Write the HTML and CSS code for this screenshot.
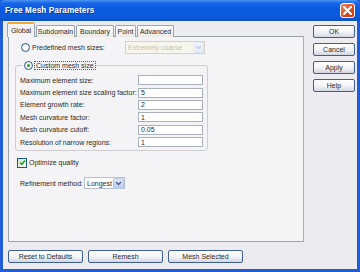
FILE: index.html
```html
<!DOCTYPE html>
<html lang="en">
<head>
  <meta charset="UTF-8" />
  <title>Free Mesh Parameters</title>
  <link rel="stylesheet" href="styles.css">
</head>
<body>
  <div class="window">
    <div class="titlebar">
      <span class="title">Free Mesh Parameters</span>
      <span class="close">
        <svg width="9" height="9" viewBox="0 0 9 9"><path d="M1 1 L8 8 M8 1 L1 8" stroke="#fff" stroke-width="2" stroke-linecap="square" /></svg>
      </span>
    </div>

    <div class="frame">
      <div class="main">
        <div class="tabbox">
          <div class="tabstrip">
            <span class="tab active">Global</span>
            <span class="tab w-sub">Subdomain</span>
            <span class="tab w-bnd">Boundary</span>
            <span class="tab w-pt">Point</span>
            <span class="tab w-adv">Advanced</span>
          </div>

          <div class="panel">
            <div class="predef">
              <span class="radio"></span>
              <span class="predef-label">Predefined mesh sizes:</span>
              <span class="combo disabled">
                <span class="combo-text">Extremely coarse</span>
                <span class="combo-btn"><svg width="7" height="5" viewBox="0 0 7 5"><path d="M1 1 L3.5 3.5 L6 1" fill="none" stroke="#c6d0e4" stroke-width="1.4" /></svg></span>
              </span>
            </div>

            <fieldset class="group">
              <legend>
                <span class="radio checked"></span>
                <span class="focus">Custom mesh size</span>
              </legend>
              <div class="field"><span class="field-label">Maximum element size:</span><span class="textbox"></span></div>
              <div class="field"><span class="field-label">Maximum element size scaling factor:</span><span class="textbox">5</span></div>
              <div class="field"><span class="field-label">Element growth rate:</span><span class="textbox">2</span></div>
              <div class="field"><span class="field-label">Mesh curvature factor:</span><span class="textbox">1</span></div>
              <div class="field"><span class="field-label">Mesh curvature cutoff:</span><span class="textbox">0.05</span></div>
              <div class="field"><span class="field-label">Resolution of narrow regions:</span><span class="textbox">1</span></div>
            </fieldset>

            <div class="check-row">
              <span class="checkbox">
                <svg width="7" height="7" viewBox="0 0 7 7"><path d="M1 3.5 L2.8 5.3 L6 1.5" fill="none" stroke="#21a121" stroke-width="1.5" /></svg>
              </span>
              <span>Optimize quality</span>
            </div>

            <div class="refine">
              <span class="refine-label">Refinement method:</span>
              <span class="combo small">
                <span class="combo-text">Longest</span>
                <span class="combo-btn"><svg width="7" height="5" viewBox="0 0 7 5"><path d="M1 1 L3.5 3.5 L6 1" fill="none" stroke="#4d6185" stroke-width="1.4" /></svg></span>
              </span>
            </div>
          </div>
        </div>

        <div class="side">
          <span class="btn">OK</span>
          <span class="btn">Cancel</span>
          <span class="btn">Apply</span>
          <span class="btn">Help</span>
        </div>
      </div>

      <div class="footer">
        <span class="btn wide">Reset to Defaults</span>
        <span class="btn wide">Remesh</span>
        <span class="btn wide">Mesh Selected</span>
      </div>
    </div>
  </div>
</body>
</html>
```

FILE: styles.css
```css
body {
  margin: 0;
  font-family: 'Liberation Sans', Arial, sans-serif;
  font-size: 7px;
  color: #2b2b2b;
}

.window {
  width: 360px;
  height: 272px;
  display: flex;
  flex-direction: column;
  background-color: #1f5cd6;
}

.titlebar {
  height: 21px;
  flex: none;
  display: flex;
  align-items: center;
  justify-content: space-between;
  padding: 0 5px 0 5px;
  box-sizing: border-box;
  background: linear-gradient(#4d95f4 0, #1a66e6 3px, #0a5ae2 40%, #0c5ada 80%, #0a4fc6 100%);
  border-radius: 5px 5px 0 0;
}

.title {
  color: #fff;
  font-weight: bold;
  font-size: 8.2px;
  letter-spacing: 0.1px;
  text-shadow: 1px 1px 0 #0a3a9a;
}

.close {
  width: 13px;
  height: 13px;
  border: 1px solid #fff;
  border-radius: 3px;
  background: linear-gradient(135deg, #f08a66, #d9471f 60%, #c43a12);
  display: flex;
  align-items: center;
  justify-content: center;
}

.frame {
  flex: 1;
  margin: 0 3px 3px 3px;
  background-color: #ecebef;
  padding: 2px 0 0 5px;
  display: flex;
  flex-direction: column;
}

.main {
  display: flex;
}

.tabbox {
  width: 296px;
}

.tabstrip {
  height: 14px;
  display: flex;
  align-items: flex-end;
  margin-bottom: -1px;
  position: relative;
  z-index: 1;
}

.tab {
  height: 12px;
  box-sizing: border-box;
  border: 1px solid #9ba3ad;
  border-bottom: none;
  border-radius: 2px 2px 0 0;
  background: linear-gradient(#ffffff, #ecebe6);
  display: flex;
  align-items: center;
  justify-content: center;
  margin-right: 1px;
}

.tab.active {
  width: 28px;
  height: 15px;
  margin-left: -1px;
  background: #f4f4f6;
  border-top: 2px solid #f5a935;
  padding-bottom: 1px;
}

.w-sub { width: 39px; }
.w-bnd { width: 38px; }
.w-pt { width: 21px; }
.w-adv { width: 37px; }

.panel {
  height: 206px;
  box-sizing: border-box;
  border: 1px solid #9ba3ad;
  border-right-color: #a8aeb6;
  background-color: #f4f4f6;
  padding: 4px 0 0 12px;
}

.predef {
  height: 13px;
  display: flex;
  align-items: center;
}

.radio {
  width: 7px;
  height: 7px;
  border: 1px solid #2a5a8e;
  border-radius: 50%;
  background: radial-gradient(#ffffff 40%, #dcdcd6);
  display: inline-flex;
  align-items: center;
  justify-content: center;
  flex: none;
}

.radio.checked::after {
  content: "";
  width: 3px;
  height: 3px;
  border-radius: 50%;
  background-color: #25a125;
}

.predef-label {
  margin-left: 2px;
  width: 93px;
}

.combo {
  height: 13px;
  box-sizing: border-box;
  border: 1px solid #b9bfc8;
  background-color: #fff;
  display: flex;
  align-items: center;
}

.combo.disabled {
  width: 80px;
  background-color: #f6f6ec;
  border-color: #d2d2c8;
  color: #c4c3b4;
}

.combo-text {
  flex: 1;
  padding-left: 2px;
}

.combo-btn {
  width: 11px;
  height: 11px;
  box-sizing: border-box;
  border: 1px solid #b7c7e6;
  border-radius: 2px;
  background: linear-gradient(#e0e9fb, #b8cdf4);
  display: flex;
  align-items: center;
  justify-content: center;
}

.combo.disabled .combo-btn {
  border-color: #e2e8f2;
  background: linear-gradient(#f1f4fa, #e4eaf5);
}

.combo.small {
  width: 41px;
  height: 12px;
}

.group {
  margin: 6px 0 0 -6px;
  width: 193px;
  box-sizing: border-box;
  border: 1px solid #cfcdd2;
  border-radius: 3px;
  padding: 4px 4px 2px 4px;
}

.group legend {
  padding: 0 1px;
  margin-left: 3px;
  height: 10px;
  display: flex;
  align-items: center;
}

.focus {
  margin-left: 2px;
  outline: 1px dotted #555;
  padding: 0 1px;
  line-height: 7px;
}

.field {
  height: 12.4px;
  display: flex;
  align-items: center;
}

.field-label {
  width: 118px;
}

.textbox {
  width: 65px;
  height: 10px;
  box-sizing: border-box;
  border: 1px solid #a9b0bd;
  background-color: #fff;
  padding-left: 2px;
  display: flex;
  align-items: center;
}

.check-row {
  display: flex;
  align-items: center;
  margin: 7px 0 0 -4px;
  height: 9px;
}

.checkbox {
  width: 8px;
  height: 8px;
  border: 1px solid #1e5585;
  background: linear-gradient(135deg, #dcdcd6, #ffffff);
  margin-right: 2px;
  display: flex;
  align-items: center;
  justify-content: center;
}

.refine {
  display: flex;
  align-items: center;
  margin: 10px 0 0 -1px;
}

.refine-label {
  width: 64px;
}

.side {
  margin-left: 9px;
  padding-top: 2px;
  display: flex;
  flex-direction: column;
  gap: 5px;
}

.btn {
  width: 42px;
  height: 13px;
  box-sizing: border-box;
  border: 1px solid #3f5f93;
  border-radius: 2px;
  background: linear-gradient(#ffffff, #f3f3f7 55%, #d2d6e2);
  display: flex;
  align-items: center;
  justify-content: center;
}

.footer {
  margin-top: 8px;
  display: flex;
  gap: 5px;
}

.btn.wide {
  width: 75px;
}
```
